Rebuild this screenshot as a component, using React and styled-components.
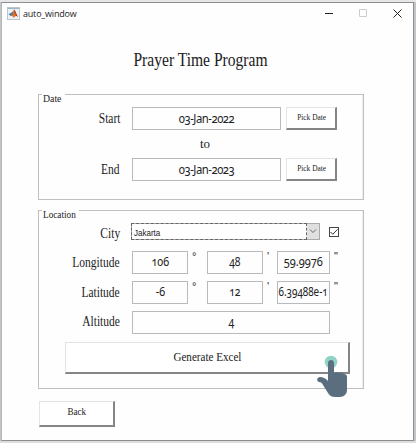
import React from 'react';
import styled, { createGlobalStyle } from 'styled-components';

const GlobalStyle = createGlobalStyle`
  * { box-sizing: border-box; }
  body { margin: 0; background: #d4d4d4; overflow: hidden; }
`;

const Desktop = styled.div`
  width: 416px;
  height: 443px;
  padding: 2px 2px 2px 1px;
  background: linear-gradient(#e6e6e6 0 2px, #c3c6c8 2px 441px, #dedcdc 441px);
`;

const Window = styled.main`
  display: flex;
  flex-direction: column;
  align-items: flex-start;
  height: 439px;
  border: 1px solid #8b8f91;
  border-left-color: #b4b6b8;
  background: #fefefe;
  color: #222;
  font-family: 'Liberation Serif', serif;
`;

const TitleBar = styled.header`
  display: flex;
  align-items: center;
  width: 100%;
  height: 21px;
  padding: 0 11px 0 5px;
`;

const WindowTitle = styled.span`
  flex: 1;
  margin-left: 3px;
  font: 9px 'Open Sans', sans-serif;
  letter-spacing: -0.2px;
`;

const WindowControls = styled.div`
  display: flex;
  align-items: center;
  gap: 25px;
`;

const Text = styled.span`
  display: inline-block;
  font-size: ${(p) => p.$size || 13}px;
  line-height: 1;
  white-space: pre;
  letter-spacing: ${(p) => p.$track || 0}px;
  transform: scaleX(${(p) => p.$stretch || 1});
  transform-origin: ${(p) => p.$origin || 'center'};
`;

const Heading = styled.h1`
  width: 100%;
  height: 20px;
  margin: 21px 0 0;
  padding-right: 14px;
  font-weight: 400;
  line-height: 20px;
  text-align: center;
`;

const Panel = styled.fieldset`
  display: flex;
  flex-direction: column;
  width: 326px;
  height: ${(p) => p.$height}px;
  min-width: 0;
  margin: ${(p) => p.$gap}px 0 0 36px;
  padding: 0;
  border: 1px solid #c0c0c2;
  box-shadow: inset -1px 0 #eee;
`;

const Legend = styled.legend`
  width: ${(p) => p.$width}px;
  height: 1px;
  margin-left: 3px;
  padding: 0 0 0 1px;
  line-height: 0;
`;

const Row = styled.div`
  display: flex;
  align-items: center;
  height: ${(p) => p.$height || 23}px;
  margin-top: ${(p) => p.$gap || 0}px;
`;

const Label = styled.label`
  width: 81px;
  margin-right: 12px;
  padding-bottom: ${(p) => p.$lift || 0}px;
  padding-top: ${(p) => p.$drop || 0}px;
  line-height: 1;
  display: flex;
  justify-content: flex-end;
`;

const Field = styled.div`
  display: flex;
  align-items: center;
  justify-content: center;
  width: ${(p) => p.$width}px;
  height: 23px;
  overflow: hidden;
  border: 1px solid #b9babd;
  font-family: 'Noto Sans', sans-serif;
  font-variant-numeric: oldstyle-nums;
`;

const Unit = styled.span`
  align-self: flex-start;
  width: ${(p) => p.$width}px;
  padding-left: 4px;
  font: 11px/11px 'Liberation Sans', sans-serif;
`;

const Button = styled.button`
  display: flex;
  align-items: center;
  justify-content: center;
  width: ${(p) => p.$width}px;
  height: ${(p) => p.$height}px;
  margin: ${(p) => p.$margin || '0'};
  padding: 0 0 2px;
  border: 1px solid #e4e4e4;
  border-right: 2px solid #858585;
  border-bottom: 2px solid #858585;
  background: #fff;
  color: #222;
  font-family: 'Liberation Serif', serif;
`;

const PickButton = styled(Button)`
  margin-left: 5px;
  padding-left: 2px;
`;

const Between = styled.div`
  height: 28px;
  padding-left: 161px;
  line-height: 25px;
`;

const Select = styled.div`
  display: flex;
  width: 189px;
  height: 17px;
  margin-left: -1px;
  border: 1px solid #aaa;
  font-family: 'Liberation Sans', sans-serif;
`;

const SelectValue = styled.div`
  flex: 1;
  padding: 3px 0 0 2px;
  border: 1px dashed #666;
  margin: -1px 0 -1px -1px;
  line-height: 7px;
`;

const SelectArrow = styled.div`
  display: flex;
  align-items: center;
  justify-content: center;
  width: 12px;
  background: #e0e0e0;
`;

const Checkbox = styled.div`
  display: flex;
  width: 10px;
  height: 10px;
  margin: 1px 0 0 9px;
  border: 1px solid #444;
`;

const Pointer = styled.svg`
  position: absolute;
  left: 316px;
  top: 355px;
`;

const MatlabIcon = () => (
  <svg width="13" height="13" viewBox="0 0 13 13">
    <rect x=".5" y=".5" width="12" height="12" fill="#edf1f3" stroke="#b9c5cb" />
    <path d="M1 1h11v1H1z" fill="#9db5c3" />
    <path d="M1.5 7l3-1.3L7 3 5.7 8.5 3.7 9z" fill="#397ca8" />
    <path d="M3.4 9L5.5 7.3 7.1 2.5c1.2.5 2 4.6 4 7.3L9 8.8 6.5 10.7 5 8.6z" fill="#e07228" />
    <path d="M7.1 2.5c1.2.5 2 4.6 4 7.3L9 8.8 8 6z" fill="#a8392a" />
  </svg>
);

const RowLabel = ({ children, lift, drop }) => (
  <Label $lift={lift} $drop={drop}>
    <Text $size={14} $stretch={0.82} $origin="right">{children}</Text>
  </Label>
);

const DateRow = ({ label, value, gap, lift }) => (
  <Row $gap={gap}>
    <RowLabel lift={lift}>{label}</RowLabel>
    <Field $width={149}><Text $size={12} $track={-0.5} $stretch={0.94}>{value}</Text></Field>
    <PickButton $width={51} $height={23}><Text $size={9} $stretch={0.82}>Pick Date</Text></PickButton>
  </Row>
);

const AngleRow = ({ label, gap, degrees, minutes, seconds, stretch }) => (
  <Row $gap={gap}>
    <RowLabel>{label}</RowLabel>
    <Field $width={56}><Text $size={12.5} $stretch={0.86}>{degrees}</Text></Field>
    <Unit $width={19}>°</Unit>
    <Field $width={56}><Text $size={12.5} $stretch={0.83}>{minutes}</Text></Field>
    <Unit $width={14}>'</Unit>
    <Field $width={53}><Text $size={12.5} $stretch={stretch}>{seconds}</Text></Field>
    <Unit $width={12}>"</Unit>
  </Row>
);

export default function App() {
  return (
    <Desktop>
      <GlobalStyle />
      <Window>
        <TitleBar>
          <MatlabIcon />
          <WindowTitle>auto_window</WindowTitle>
          <WindowControls>
            <svg width="9" height="9"><path d="M0 4.5h8" stroke="#222" /></svg>
            <svg width="9" height="9"><path d="M.5.5h7v7h-7z" fill="none" stroke="#ccc" /></svg>
            <svg width="9" height="9"><path d="M.5.5l8 8m0-8l-8 8" stroke="#222" /></svg>
          </WindowControls>
        </TitleBar>
        <Heading><Text $size={18} $stretch={0.865}>Prayer Time Program</Text></Heading>
        <Panel $height={106} $gap={29}>
          <Legend $width={23}><Text $size={10.5} $stretch={0.93} $origin="left">Date</Text></Legend>
          <DateRow gap={12} label="Start" value="03-Jan-2022" />
          <Between><Text $size={13}>to</Text></Between>
          <DateRow label="End" value="03-Jan-2023" />
        </Panel>
        <Panel $height={179} $gap={10}>
          <Legend $width={37}><Text $size={10.5} $stretch={0.88} $origin="left">Location</Text></Legend>
          <Row $gap={10} $height={21}>
            <RowLabel drop={5}>City</RowLabel>
            <Select>
              <SelectValue><Text $size={8.5} $stretch={0.94} $origin="left">Jakarta</Text></SelectValue>
              <SelectArrow><svg width="8" height="5"><path d="M1 .5l3 3 3-3" fill="none" stroke="#666" /></svg></SelectArrow>
            </Select>
            <Checkbox><svg width="8" height="8"><path d="M.5 4l2.3 2.3L7.5 1.3" fill="none" stroke="#333" /></svg></Checkbox>
          </Row>
          <AngleRow gap={9} label="Longitude" degrees="106" minutes="48" seconds="59.9976" stretch={0.88} />
          <AngleRow gap={7} label="Latitude" degrees="-6" minutes="12" seconds="6.39488e-1" stretch={0.79} />
          <Row $gap={7}>
            <RowLabel lift={2}>Altitude</RowLabel>
            <Field $width={198}><Text $size={12.5} $stretch={0.85}>4</Text></Field>
          </Row>
          <Button $width={285} $height={32} $margin="8px 0 0 26px"><Text $size={13.5} $stretch={0.82}>Generate Excel</Text></Button>
        </Panel>
        <Button $width={76} $height={26} $margin="12px 0 0 37px"><Text $size={10.5} $stretch={0.87}>Back</Text></Button>
      </Window>
      <Pointer width="32" height="43" viewBox="0 0 32 43">
        <circle cx="15" cy="7" r="6.3" fill="#91d4c5" />
        <path d="M12 8c0-4 6-4 6 0v10c2-1 4-1 5 0 2-1 4 0 5 1 2 0 3 1 3 3v13c0 4-3 7-7 7h-5c-3 0-5-1-7-4L7 30c-1-2-2-3-4-3-3-1-2-5 1-5 3 0 5 1 8 4z" fill="#5b6e80" />
      </Pointer>
    </Desktop>
  );
}
